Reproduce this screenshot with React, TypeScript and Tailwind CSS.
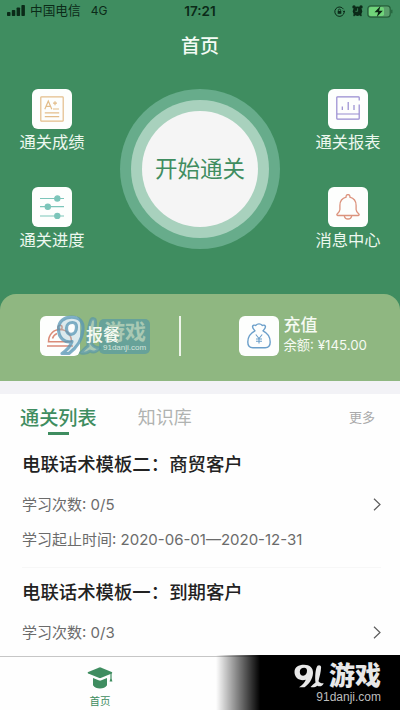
import React from 'react';

interface TileProps {
  label: string;
  children: React.ReactNode;
}

interface Lesson {
  id: number;
  title: string;
  count: string;
  period?: string;
}

const lessons: Lesson[] = [
  { id: 2, title: '电联话术模板二：商贸客户', count: '0/5', period: '2020-06-01—2020-12-31' },
  { id: 1, title: '电联话术模板一：到期客户', count: '0/3' },
];

const ScoreIcon = () => (
  <svg className="w-6 h-[26px]" viewBox="0 0 24 26" fill="none" stroke="#e3bd8a" strokeWidth="1.2">
    <rect x="0.8" y="0.8" width="22.4" height="24.4" rx="0.8" />
    <path d="M4.8 13.2 8.3 5l3.5 8.2M6 10.4h4.6M13 7.2h4M15 5.2v4M13 13h6M4.8 16.8h14.4M4.8 20.6h14.4" />
  </svg>
);

const ReportIcon = () => (
  <svg className="w-6 h-6 -mt-[2px]" viewBox="0 0 24 24" fill="none" stroke="#978bd0" strokeWidth="1.2">
    <path d="M23.2 4.5V1.6a.8.8 0 0 0-.8-.8H1.6a.8.8 0 0 0-.8.8v20.8c0 .4.4.8.8.8h20.8c.4 0 .8-.4.8-.8V8.5M.8 18h22.4M6.3 10.5V14M12.2 6v8M18 9v5" />
  </svg>
);

const ProgressIcon = () => (
  <svg className="w-6 h-6" viewBox="0 0 24 24" fill="#7cc5ba" stroke="#7cc5ba" strokeWidth="1.2">
    <path d="M0 3.500h24M0 11.700h24M0 21h24" />
    <circle cx="17.300" cy="3.500" r="2.600" />
    <circle cx="7.800" cy="11.700" r="2.600" />
    <circle cx="17.300" cy="21" r="2.600" />
  </svg>
);

const BellIcon = () => (
  <svg className="w-6 h-[26px]" viewBox="0 0 24 26" fill="none" stroke="#dc937d" strokeWidth="1.3" strokeLinejoin="round">
    <path d="M10.200 3.100a1.900 1.900 0 1 1 3.600 0c4 1 6.300 4.200 6.300 8.300v4.100c0 1.900 1.200 3.100 2.700 4.400.6.600.4 1.600-.4 1.600H1.600c-.8 0-1-1-.4-1.600 1.500-1.300 2.700-2.500 2.700-4.400v-4.100c0-4.100 2.300-7.300 6.300-8.300Z" />
    <path d="M8.300 21.600c.3 2.200 1.600 3.400 3.700 3.400s3.400-1.200 3.700-3.400" />
  </svg>
);

const MealIcon = () => (
  <svg className="w-[26px] h-[24px]" viewBox="0 0 26 24" fill="none" stroke="#d98b78" strokeWidth="1.5">
    <path d="M1.500 17.800C1.500 10.500 6.500 5.500 13 5.500s11.500 5 11.500 12.300ZM0 22h26M5.500 14.500c.7-2.500 2-4 4.500-5" />
    <circle cx="13" cy="3.400" r="2.100" />
  </svg>
);

const PurseIcon = () => (
  <svg className="w-6 h-[26px]" viewBox="0 0 24 26" fill="none" stroke="#6b9fca" strokeWidth="1.4" strokeLinejoin="round">
    <path d="M8 7.800C6.500 6 5.200 4.800 5.600 3.300c.3-1.200 1.900-1.400 3-.8C9.800 1.300 10.500.9 12 .9s2.200.4 3.400 1.600c1.100-.6 2.700-.4 3 .8.4 1.500-.9 2.700-2.400 4.500 4.500 2.200 7.200 6.700 7.200 11.200 0 4-1.600 5.700-5 5.700H5.800c-3.400 0-5-1.700-5-5.700C.8 14.500 3.500 10 8 7.800Z" />
    <path strokeWidth="1.1" d="m8.800 11.500 3.200 4 3.200-4M12 15.500V20.500M9 16h6M9 18.300h6" />
  </svg>
);

const CapIcon = () => (
  <svg className="w-[26px] h-[22px]" viewBox="0 0 26 22" fill="currentColor">
    <path d="M12.300.4a2 2 0 0 1 1.400 0l11 4.600c.7.3.7 1.200 0 1.500l-11 4.600c-.5.200-.9.200-1.400 0L1.200 6.500c-.7-.3-.7-1.200 0-1.500Z" />
    <path d="M6 11v7.200C7.500 20.500 10 21.500 13 21.500s5.500-1 7-3.300V11l-6.200 2.600c-.5.200-1 .2-1.600 0Z" />
    <path d="M23.400 6h1.200v5.500l.8 3h-2.800l.8-3Z" />
  </svg>
);

const IconBox = ({ children }: { children: React.ReactNode }) => (
  <div className="w-10 h-10 shrink-0 rounded-md bg-[#fdfefd] flex items-center justify-center">{children}</div>
);

const Tile = ({ label, children }: TileProps) => (
  <div className="flex flex-col items-center h-[98px]">
    <IconBox>{children}</IconBox>
    <span className="mt-[1px] text-[16.300px] leading-6 text-[#edf8ef] whitespace-nowrap">{label}</span>
  </div>
);

const NineOne = ({ className }: { className: string }) => (
  <svg className={className} viewBox="0 0 30 24" fill="currentColor">
    <path
      fillRule="evenodd"
      d="M.5 8C.5 3.200 4.500.8 10 .8c6 0 9.200 3.200 9 8.200-.2 6-4 11-8.500 14.200H5c3-2 5.500-4.500 6.800-7.500C6 17.500.5 14 .5 8Zm5.300-.3c0 2.600 1.300 4 3.400 4 2.300 0 3.800-2.200 3.800-5 0-2-1-3-2.800-3-2.500 0-4.400 1.500-4.400 4Z"
    />
    <path d="M23.500 1.800c1.300-1 3.700-.5 3.600 1.500-.2 5-1.600 9.500-2.600 14 1.500 1.800 3 2.200 5.200 1.900-1 2.800-3.700 4-6.500 2.500-1.800 1.500-4.200 2-6.700 1.200 1.800-1.500 3.300-3.200 5-4.300C20.700 13.500 21.500 4 23.500 1.800Z" />
  </svg>
);

const StatusBar = () => (
  <div className="h-[22px] grid grid-cols-3 items-center px-[7px] text-[#0b2a18]">
    <div className="flex items-center">
      <svg className="w-[18px] h-[11px]" viewBox="0 0 18 11" fill="currentColor">
        <rect x="0" y="7" width="3.5" height="4" rx="0.8" />
        <rect x="4.8" y="5" width="3.5" height="6" rx="0.8" />
        <rect x="9.6" y="2.5" width="3.5" height="8.5" rx="0.8" />
        <rect x="14.4" y="0" width="3.5" height="11" rx="0.8" />
      </svg>
      <span className="ml-[5px] text-[12.700px]">中国电信</span>
      <span className="ml-[10px] text-xs">4G</span>
    </div>
    <span className="text-center text-[13.500px] font-semibold">17:21</span>
    <div className="flex items-center justify-end">
      <svg className="w-[11px] h-[11px]" viewBox="0 0 11 11" fill="none" stroke="currentColor">
        <path d="M9.500 3.200A4.700 4.700 0 1 0 10.200 6M8.800 4.800l1.400 1.200.8-1.500" />
        <rect x="3.700" y="5" width="3.600" height="2.800" fill="currentColor" stroke="none" />
        <path strokeWidth="0.8" d="M4.400 5V4.200a1.100 1.100 0 0 1 2.200 0V5" />
      </svg>
      <svg className="ml-[7px] w-[11px] h-[12px]" viewBox="0 0 11 12" fill="currentColor">
        <circle cx="5.500" cy="6.200" r="4.700" />
        <circle cx="2" cy="2" r="1.700" />
        <circle cx="9" cy="2" r="1.700" />
        <path d="m1 10 1.500-1.500 1.300 1.300L2 11.500ZM10 10 8.500 8.500 7.200 9.800 9 11.500Z" />
        <path d="M5.600 3.300v3H3.400" stroke="#3f8d60" strokeWidth="0.8" fill="none" />
      </svg>
      <svg className="ml-1 w-[26px] h-[13px]" viewBox="0 0 26 13">
        <rect x="0.800" y="0.800" width="22.400" height="11.400" rx="3" fill="#5a9e6c" stroke="#24603a" strokeWidth="1.2" />
        <rect x="2" y="2" width="15" height="9" rx="1.800" fill="#70d47a" />
        <path d="M13.500 1 7.500 7.300h3.700L9.800 12l6-6.300h-3.700Z" fill="#0b2413" />
        <path d="M24.800 4.800v3.400" stroke="#24603a" strokeWidth="1.2" />
      </svg>
    </div>
  </div>
);

const Watermark = () => (
  <div className="absolute left-[56px] -top-[1px] w-[96px] h-[42px] text-[#a9c9b3]">
    <svg className="absolute inset-0 w-[96px] h-[42px]" viewBox="0 0 96 42" fill="none" strokeLinejoin="round">
      <rect x="43" y="4" width="51" height="35" rx="5" fill="#5c9c9f" fillOpacity="0.8" />
      <path
        stroke="#5795b4"
        strokeOpacity="0.75"
        strokeWidth="3.2"
        fill="#9fc6cf"
        fillOpacity="0.35"
        fillRule="evenodd"
        d="M2.500 14C2.500 6.500 8 2.200 15.500 2.200c8 0 12 4.500 11.500 12C26.500 24 20.500 33 13 38.500H6C11 35 14.500 31 16 26.500 8.500 28 2.500 23 2.500 14Zm8-.7c0 4 1.700 6 4.700 6 3.200 0 5.300-3.300 5.300-7.300 0-2.800-1.500-4.500-4-4.500-3.600 0-6 2.200-6 5.800Z"
      />
      <path
        stroke="#5795a7"
        strokeOpacity="0.7"
        strokeWidth="3"
        fill="#a9c9b3"
        d="M34.500 6c1.500-3.500 5-3 5 .7 0 8-2.300 15-4 22 2.300 3.200 4.600 4.400 8.200 4-2 4-6 5.500-9.700 3.300-2.800 2.300-6.200 2.800-9.500 1.800 2.700-2.500 5-5 7.500-6.700C31.500 23 32.500 12 34.500 6Z"
      />
    </svg>
    <div className="absolute left-[48px] top-[5px] text-[21px] leading-[24px] font-bold whitespace-nowrap">游戏</div>
    <div className="absolute left-[47px] top-[28px] text-[8px] leading-[10px] text-[#d3e2da] whitespace-nowrap font-['Liberation_Sans']">91danji.com</div>
  </div>
);

const LessonRow = ({ lesson }: { lesson: Lesson }) => (
  <div className="h-32 pl-[22px] pr-[19px]">
    <h3 className="text-[18.400px] leading-7 font-medium text-[#222] whitespace-nowrap">{lesson.title}</h3>
    <div className="mt-[13px] flex items-center justify-between text-[15px] leading-7 text-[#6b6b6b]">
      <span>学习次数: {lesson.count}</span>
      <svg className="-mt-[2px] w-2 h-[13px]" viewBox="0 0 8 13" fill="none" stroke="#5c5c5c" strokeWidth="1.2">
        <path d="m1 .7 6 5.800-6 5.800" />
      </svg>
    </div>
    {lesson.period && (
      <div className="mt-[7px] h-[42px] border-b border-[#f7f7f7] text-[15px] leading-7 text-[#6b6b6b] whitespace-nowrap">
        学习起止时间: {lesson.period}
      </div>
    )}
  </div>
);

const App: React.FC = () => {
  return (
    <div className="relative w-[400px] h-[710px] flex flex-col overflow-hidden bg-[#fefefe] font-[Inter,'Noto_Sans_CJK_SC',sans-serif]">
      {/* Header */}
      <header className="h-[381px] shrink-0 flex flex-col bg-[#3f8d60]">
        <StatusBar />
        <h1 className="h-12 text-center text-[19px] leading-[50px] font-medium text-[#f4fbf5]">首页</h1>

        <div className="h-56 flex justify-between px-5 pt-[19px]">
          <div className="w-16 flex flex-col items-center">
            <Tile label="通关成绩"><ScoreIcon /></Tile>
            <Tile label="通关进度"><ProgressIcon /></Tile>
          </div>
          <div className="w-40 h-40 rounded-full bg-[#67ac8b] flex items-center justify-center">
            <div className="w-[138px] h-[138px] rounded-full bg-[#a8d1bd] flex items-center justify-center">
              <div className="w-[116px] h-[116px] rounded-full bg-[#f5f5f5] flex items-center justify-center text-[22.500px] text-[#3f8d60] whitespace-nowrap">
                开始通关
              </div>
            </div>
          </div>
          <div className="w-16 flex flex-col items-center">
            <Tile label="通关报表"><ReportIcon /></Tile>
            <Tile label="消息中心"><BellIcon /></Tile>
          </div>
        </div>

        <div className="h-[87px] rounded-t-2xl bg-[#8fb781] flex items-center pb-1 text-[#f5faf2]">
          <div className="relative w-[179px] pl-10 flex items-center">
            <IconBox><MealIcon /></IconBox>
            <Watermark />
            <span className="relative ml-[6px] text-[17px] font-medium">报餐</span>
          </div>
          <div className="w-[1.500px] h-10 bg-[#eef5ea]" />
          <div className="pl-[58px] flex items-center">
            <IconBox><PurseIcon /></IconBox>
            <div className="ml-[5px] h-11 whitespace-nowrap">
              <div className="text-[17px] leading-[22px] font-medium">充值</div>
              <div className="-mt-[1px] text-[13.300px] leading-5">余额: ¥145.00</div>
            </div>
          </div>
        </div>
      </header>

      <div className="h-[13px] shrink-0 bg-[#f2f2f6]" />

      {/* Lesson list */}
      <main className="h-[262px] shrink-0 overflow-hidden">
        <div className="h-14 pl-5 pr-[25px] pt-[10px] flex items-start">
          <div className="flex flex-col items-center">
            <span className="text-[19.200px] leading-7 font-medium text-[#3f8d60]">通关列表</span>
            <div className="w-[21px] h-[3px] bg-[#3f8d60]" />
          </div>
          <span className="ml-[41px] text-[18px] leading-7 text-[#b0b3b1]">知识库</span>
          <span className="ml-auto text-[13px] leading-[26px] text-[#aaa]">更多</span>
        </div>
        {lessons.map((lesson) => (
          <LessonRow key={lesson.id} lesson={lesson} />
        ))}
      </main>

      {/* Bottom tabs */}
      <footer className="h-[54px] shrink-0 border-t border-[#c6c6c6] flex">
        <div className="w-[200px] flex flex-col items-center pt-[10px] text-[#3f8d60]">
          <CapIcon />
          <span className="mt-[5px] text-[10.500px] leading-4">首页</span>
        </div>
      </footer>

      <div className="absolute right-0 bottom-0 w-[184px] h-[55px] bg-gradient-to-r from-transparent to-black to-[24%] text-[#e8e8e8]">
        <div className="flex flex-col items-end pr-[19px] pt-[9px]">
          <div className="flex items-center h-6">
            <NineOne className="w-[30px] h-6" />
            <span className="ml-[5px] text-[26px] leading-6 font-black whitespace-nowrap">游戏</span>
          </div>
          <span className="mt-[1px] text-[12px] leading-4 font-['Liberation_Sans'] text-[#bdbdbd]">91danji.com</span>
        </div>
      </div>
    </div>
  );
};

export default App;
